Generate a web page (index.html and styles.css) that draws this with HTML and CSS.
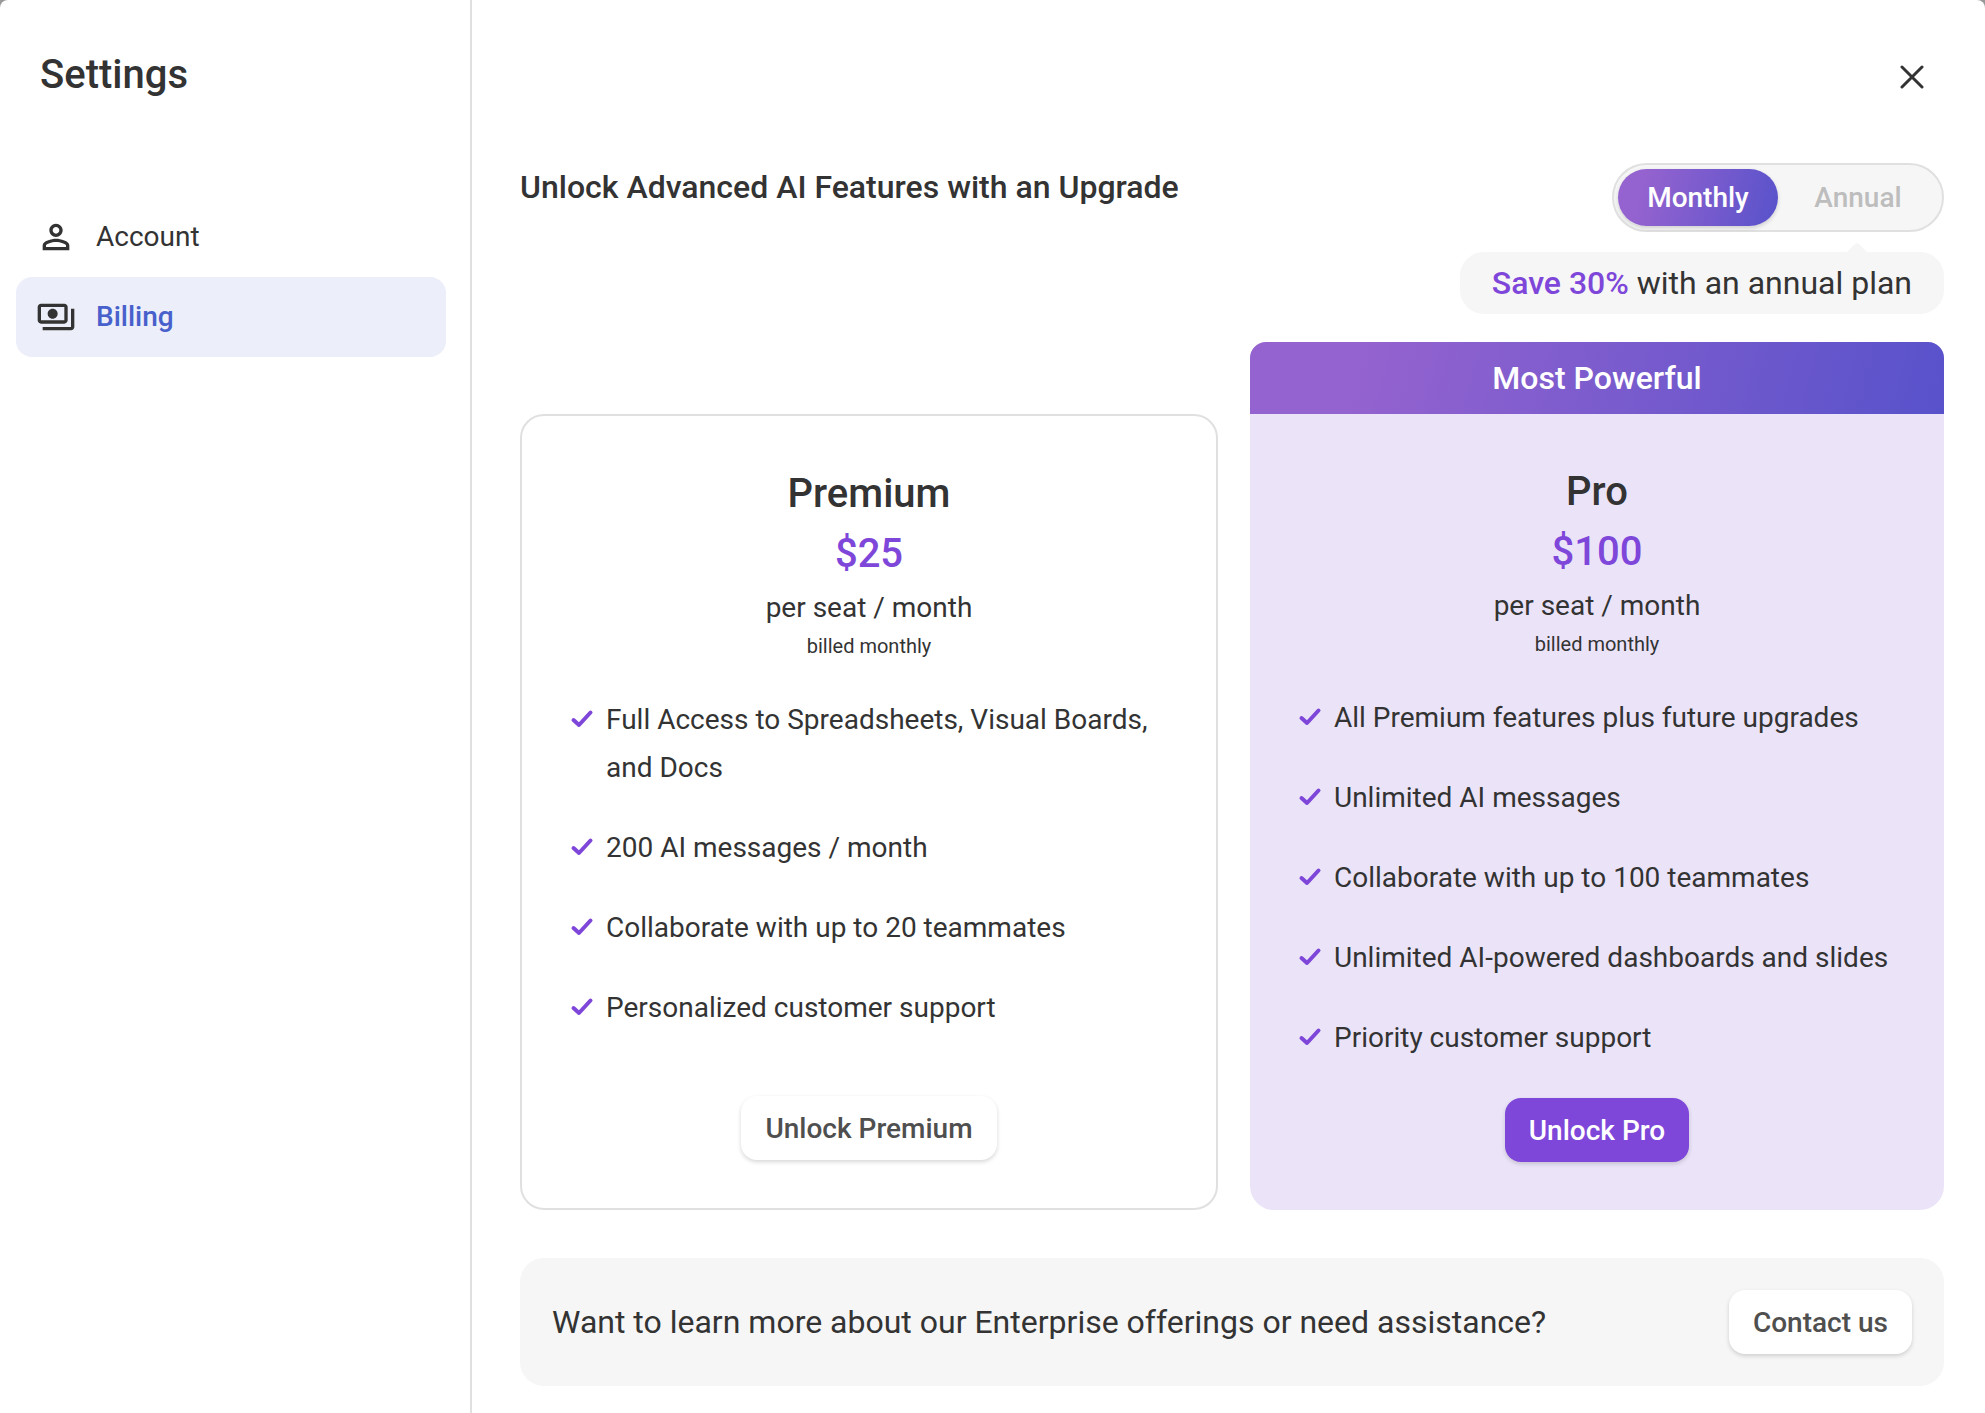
FILE: index.html
```
<!DOCTYPE html>
<html lang="en">
<head>
    <meta charset="UTF-8">
    <meta name="viewport" content="width=device-width, initial-scale=1.0">
    <title>Settings</title>
    <link rel="stylesheet" href="styles.css">
</head>
<body>
    <!-- check mark shared by the feature lists -->
    <svg class="sprite" aria-hidden="true">
        <symbol id="check" viewBox="0 0 24 24">
            <path d="M3.500 12L9 17L20.500 4.500" fill="none" stroke="currentColor" stroke-width="4" stroke-linecap="round" stroke-linejoin="round"/>
        </symbol>
    </svg>

    <div class="settings">
        <aside class="sidebar">
            <h1>Settings</h1>
            <nav>
                <a href="#account" class="nav-item">
                    <svg viewBox="0 0 24 24" aria-hidden="true">
                        <path d="M12 12c2.21 0 4-1.79 4-4s-1.79-4-4-4-4 1.79-4 4 1.79 4 4 4zm0-6c1.1 0 2 .9 2 2s-.9 2-2 2-2-.9-2-2 .9-2 2-2zm0 7c-2.67 0-8 1.34-8 4v3h16v-3c0-2.66-5.33-4-8-4zm6 5H6v-.99c.2-.72 3.3-2.01 6-2.01s5.8 1.29 6 2v1z"/>
                    </svg>
                    Account
                </a>
                <a href="#billing" class="nav-item active">
                    <svg viewBox="0 0 24 24" aria-hidden="true">
                        <path d="M19 14V6c0-1.100-.9-2-2-2H3c-1.100 0-2 .9-2 2v8c0 1.100.9 2 2 2h14c1.100 0 2-.9 2-2zm-2 0H3V6h14v8zm-7-7c-1.660 0-3 1.340-3 3s1.340 3 3 3 3-1.340 3-3-1.340-3-3-3zm13 0v11c0 1.100-.9 2-2 2H4v-2h17V7h2z"/>
                    </svg>
                    Billing
                </a>
            </nav>
        </aside>

        <main class="content">
            <button type="button" class="close" aria-label="Close">
                <svg viewBox="0 0 24 24" aria-hidden="true">
                    <path d="M2 2L22 22M22 2L2 22" stroke="currentColor" stroke-width="3" stroke-linecap="round"/>
                </svg>
            </button>

            <div class="heading">
                <h2>Unlock Advanced AI Features with an Upgrade</h2>
                <div class="billing-period">
                    <div class="toggle">
                        <button type="button" class="selected" aria-pressed="true">Monthly</button>
                        <button type="button" aria-pressed="false">Annual</button>
                    </div>
                    <p class="savings"><strong>Save 30%</strong> with an annual plan</p>
                </div>
            </div>

            <div class="plans">
                <section class="plan premium">
                    <h3>Premium</h3>
                    <p class="price">$25</p>
                    <p class="per-seat">per seat / month</p>
                    <p class="billed">billed monthly</p>
                    <ul class="features">
                        <li><svg aria-hidden="true"><use href="#check"/></svg>Full Access to Spreadsheets, Visual Boards, and Docs</li>
                        <li><svg aria-hidden="true"><use href="#check"/></svg>200 AI messages / month</li>
                        <li><svg aria-hidden="true"><use href="#check"/></svg>Collaborate with up to 20 teammates</li>
                        <li><svg aria-hidden="true"><use href="#check"/></svg>Personalized customer support</li>
                    </ul>
                    <button type="button" class="btn">Unlock Premium</button>
                </section>

                <section class="plan pro">
                    <p class="banner">Most Powerful</p>
                    <h3>Pro</h3>
                    <p class="price">$100</p>
                    <p class="per-seat">per seat / month</p>
                    <p class="billed">billed monthly</p>
                    <ul class="features">
                        <li><svg aria-hidden="true"><use href="#check"/></svg>All Premium features plus future upgrades</li>
                        <li><svg aria-hidden="true"><use href="#check"/></svg>Unlimited AI messages</li>
                        <li><svg aria-hidden="true"><use href="#check"/></svg>Collaborate with up to 100 teammates</li>
                        <li><svg aria-hidden="true"><use href="#check"/></svg>Unlimited AI-powered dashboards and slides</li>
                        <li><svg aria-hidden="true"><use href="#check"/></svg>Priority customer support</li>
                    </ul>
                    <button type="button" class="btn btn-primary">Unlock Pro</button>
                </section>
            </div>

            <div class="enterprise">
                <p>Want to learn more about our Enterprise offerings or need assistance?</p>
                <button type="button" class="btn">Contact us</button>
            </div>
        </main>
    </div>
</body>
</html>
```
FILE: styles.css
```
* {
    box-sizing: border-box;
}
body {
    margin: 0;
    font-family: Roboto, sans-serif;
    font-size: 28px;
    line-height: 48px;
    color: #333;
    background-color: #999;
}
h1, h2, h3, p, ul {
    margin: 0;
    padding: 0;
    font-weight: 500;
}
p, ul {
    font-weight: 400;
}
button {
    font-family: inherit;
    font-size: 28px;
    font-weight: 500;
    border: none;
    padding: 0;
    cursor: pointer;
}
.sprite {
    display: none;
}
.settings {
    display: flex;
    min-height: 100vh;
    background: #fff;
    border-radius: 8px 8px 0 0;
}

/* Sidebar */
.sidebar {
    flex: 0 0 472px;
    padding: 45px 24px 24px 16px;
    border-right: 2px solid #e0e0e0;
}
.sidebar h1 {
    font-size: 40px;
    line-height: 60px;
    padding-left: 24px;
    margin-bottom: 92px;
}
.nav-item {
    display: flex;
    align-items: center;
    gap: 20px;
    height: 80px;
    padding: 0 20px;
    border-radius: 16px;
    color: #333;
    text-decoration: none;
}
.nav-item svg {
    width: 40px;
    height: 40px;
    fill: #333;
}
.nav-item.active {
    background: #eceef9;
    color: #4760cb;
    font-weight: 500;
}

/* Content */
.content {
    flex: 1;
    display: flex;
    flex-direction: column;
    padding: 45px 41px 27px 48px;
}
.close {
    display: flex;
    align-items: center;
    justify-content: center;
    align-self: flex-end;
    width: 64px;
    height: 64px;
    margin-bottom: 54px;
    background: none;
    color: #333;
}
.close svg {
    width: 24px;
    height: 24px;
}
.heading {
    display: flex;
    justify-content: space-between;
    margin-bottom: 28px;
}
.heading h2 {
    font-size: 32px;
}
.billing-period {
    display: flex;
    flex-direction: column;
    align-items: flex-end;
    gap: 20px;
}
.toggle {
    display: flex;
    padding: 4px;
    border: 2px solid #e0e0e0;
    border-radius: 36px;
    background: #f6f6f6;
}
.toggle button {
    width: 160px;
    height: 57px;
    border-radius: 32px;
    background: none;
    color: #bdbdbd;
}
.toggle .selected {
    background: linear-gradient(105deg, #9563cf 15%, #5852cb 100%);
    color: #fff;
    box-shadow: 0 2px 4px rgba(0, 0, 0, 0.16);
}
.savings {
    position: relative;
    padding: 7px 32px;
    border-radius: 24px;
    background: #f6f6f6;
    font-size: 32px;
}
/* pointer up to the Annual option */
.savings::before {
    content: "";
    position: absolute;
    top: -6px;
    right: 77px;
    width: 20px;
    height: 20px;
    border-radius: 4px;
    background: #f6f6f6;
    transform: rotate(45deg);
}
.savings strong {
    color: #7e47d9;
    font-weight: 500;
}

/* Plans */
.plans {
    display: flex;
    gap: 32px;
    margin-bottom: 48px;
}
.plan {
    flex: 1;
    display: flex;
    flex-direction: column;
    align-items: center;
    padding: 48px;
    border-radius: 24px;
}
.premium {
    margin-top: 72px;
    border: 2px solid #e0e0e0;
}
.pro {
    padding-top: 0;
    border-radius: 16px 16px 24px 24px;
    background: #ebe4f9;
}
.banner {
    align-self: stretch;
    margin: 0 -48px 48px;
    padding: 12px;
    border-radius: 16px 16px 0 0;
    background: linear-gradient(105deg, #9563cf 15%, #5852cb 100%);
    color: #fff;
    font-size: 32px;
    font-weight: 500;
    text-align: center;
}
.plan h3, .price {
    font-size: 40px;
    font-weight: 500;
    line-height: 60px;
}
.price {
    color: #7e47d9;
}
.billed {
    font-size: 20px;
    line-height: 28px;
}
.features {
    align-self: stretch;
    display: flex;
    flex-direction: column;
    gap: 32px;
    margin: 36px 0;
    list-style: none;
}
.features li {
    display: flex;
    gap: 12px;
}
.features svg {
    flex: none;
    width: 24px;
    height: 48px;
    color: #7e47d9;
}
.btn {
    height: 64px;
    padding: 0 24px;
    border-radius: 16px;
    background: #fff;
    color: #4f4f4f;
    box-shadow: 0 2px 4px rgba(0, 0, 0, 0.16);
}
.plan .btn {
    margin-top: auto;
}
.btn-primary {
    background: #7e47d9;
    color: #fff;
}

.enterprise {
    display: flex;
    align-items: center;
    justify-content: space-between;
    padding: 32px;
    border-radius: 24px;
    background: #f6f6f6;
    font-size: 32px;
}
```
